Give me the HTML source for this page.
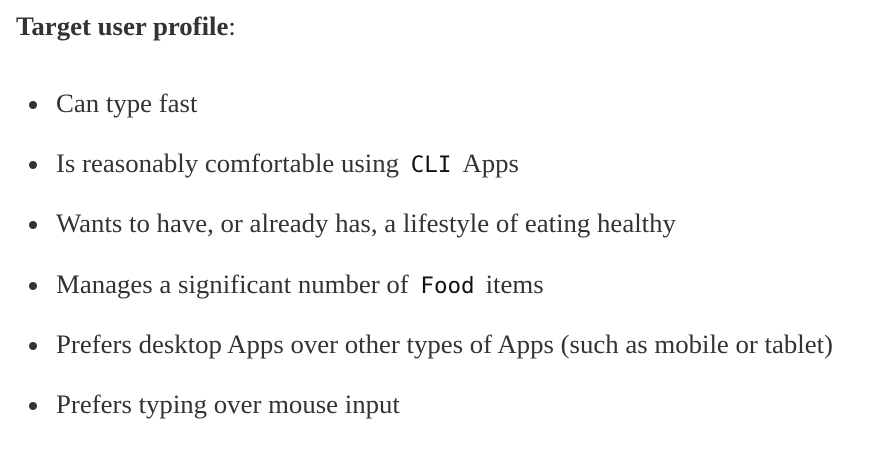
<!DOCTYPE html>
<html><head><meta charset="utf-8"><style>
html,body{margin:0;padding:0;background:#fff;width:870px;height:453px;overflow:hidden}
body{font-family:"Liberation Serif",serif;font-size:26.8px;color:#333}
p{position:absolute;left:16px;top:8px;margin:0;line-height:36px}
ul{position:absolute;left:0;top:85px;margin:0;padding:0 0 0 56px;list-style:none}
li{position:relative;height:60.2px;line-height:36px;white-space:nowrap}
li::before{content:"";position:absolute;left:-27px;top:16px;width:8px;height:8px;border-radius:50%;background:#333}
code{font-family:"DejaVu Sans Mono",monospace;font-size:22.5px;color:#111;padding:0 11px 0 5px}
</style></head><body>
<p><b>Target user profile</b>:</p>
<ul>
<li>Can type fast</li>
<li>Is reasonably comfortable using <code>CLI</code>Apps</li>
<li>Wants to have, or already has, a lifestyle of eating healthy</li>
<li>Manages a significant number of <code>Food</code>items</li>
<li>Prefers desktop Apps over other types of Apps (such as mobile or tablet)</li>
<li>Prefers typing over mouse input</li>
</ul>
</body></html>
